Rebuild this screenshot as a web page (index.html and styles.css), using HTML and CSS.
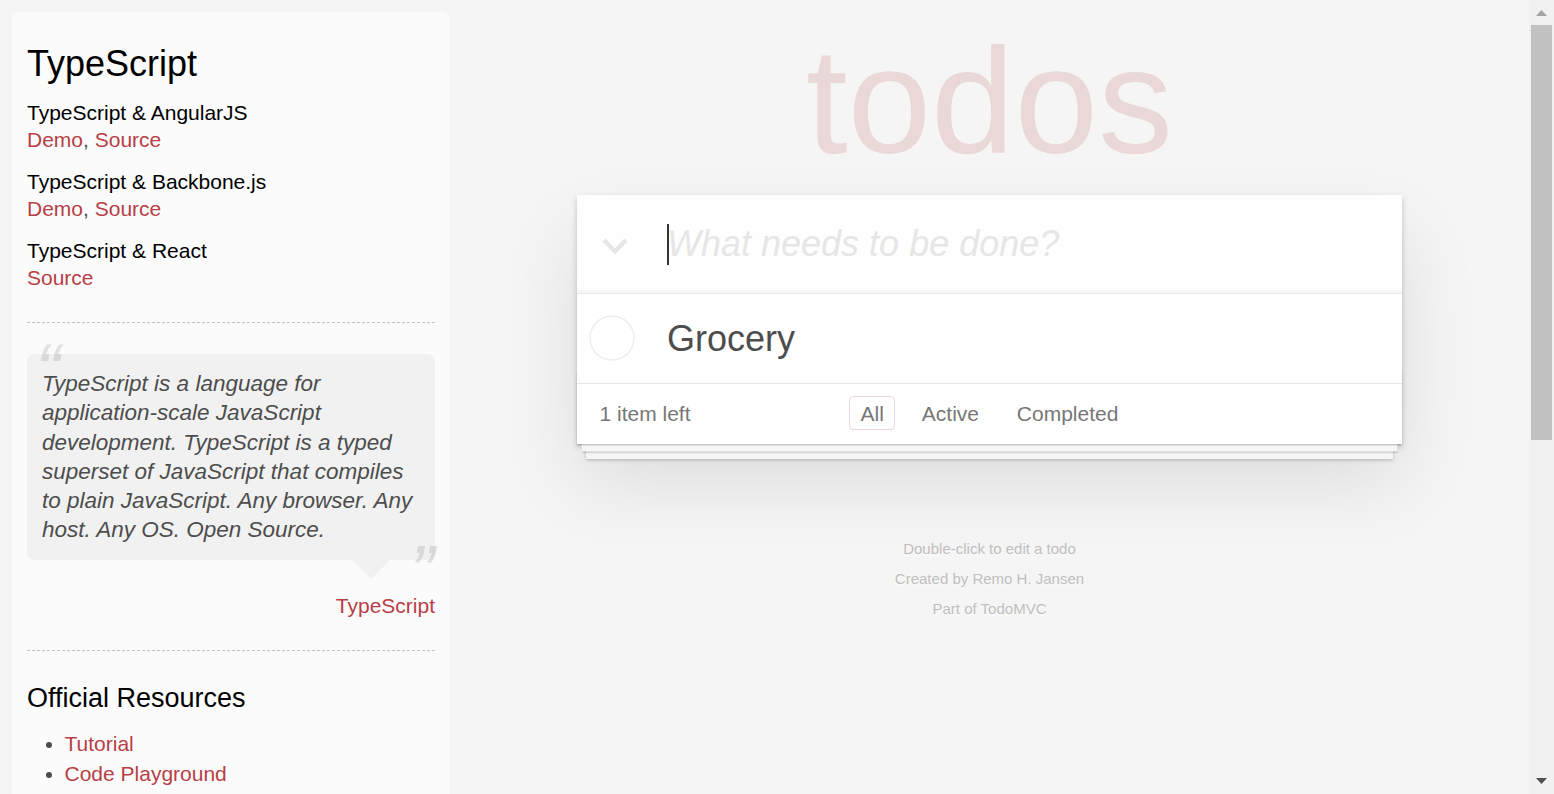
FILE: index.html
```html
<!DOCTYPE html>
<html lang="en">
<head>
<meta charset="utf-8">
<title>TypeScript • TodoMVC</title>
<link rel="stylesheet" href="styles.css">
</head>
<body>
<div class="page">
  <aside class="learn">
    <header>
      <h3>TypeScript</h3>
      <div class="source-links">
        <h5>TypeScript &amp; AngularJS</h5>
        <a href="#">Demo</a>, <a href="#">Source</a>
      </div>
      <div class="source-links">
        <h5>TypeScript &amp; Backbone.js</h5>
        <a href="#">Demo</a>, <a href="#">Source</a>
      </div>
      <div class="source-links">
        <h5>TypeScript &amp; React</h5>
        <a href="#">Source</a>
      </div>
    </header>
    <hr>
    <blockquote class="quote">
      <div class="speech-bubble">
        <p class="quote-text">TypeScript is a language for application-scale JavaScript development. TypeScript is a typed superset of JavaScript that compiles to plain JavaScript. Any browser. Any host. Any OS. Open Source.</p>
      </div>
      <footer><a href="#">TypeScript</a></footer>
    </blockquote>
    <hr>
    <h4>Official Resources</h4>
    <ul>
      <li><a href="#">Tutorial</a></li>
      <li><a href="#">Code Playground</a></li>
    </ul>
  </aside>

  <main class="main">
    <h1 class="title">todos</h1>
    <section class="todoapp">
      <header class="new-todo-row">
        <svg class="toggle-all" viewBox="0 0 28 19" width="28" height="19" aria-hidden="true">
          <polyline points="3,3 14,14.5 25,3" fill="none" stroke="#e6e6e6" stroke-width="4.2"/>
        </svg>
        <input class="new-todo" type="text" placeholder="What needs to be done?">
        <span class="caret"></span>
      </header>
      <section class="todo-main">
        <ul class="todo-list">
          <li class="todo-item">
            <svg class="toggle" viewBox="0 0 46 46" width="46" height="46" aria-hidden="true">
              <circle cx="23" cy="23" r="22" fill="none" stroke="#ededed" stroke-width="1.4"/>
            </svg>
            <label class="todo-label">Grocery</label>
          </li>
        </ul>
      </section>
      <footer class="footer">
        <span class="todo-count"><strong>1</strong> item left</span>
        <ul class="filters">
          <li><a href="#" class="selected">All</a></li>
          <li><a href="#">Active</a></li>
          <li><a href="#">Completed</a></li>
        </ul>
      </footer>
    </section>
    <footer class="info">
      <p>Double-click to edit a todo</p>
      <p>Created by <a href="#">Remo H. Jansen</a></p>
      <p>Part of <a href="#">TodoMVC</a></p>
    </footer>
  </main>
</div>

<div class="scrollbar" aria-hidden="true">
  <div class="sb-button">
    <svg width="11" height="6" viewBox="0 0 11 6"><polygon points="0,6 5.5,0 11,6" fill="#a3a3a3"/></svg>
  </div>
  <div class="sb-thumb"></div>
  <div class="sb-track"></div>
  <div class="sb-button sb-down">
    <svg width="11" height="6" viewBox="0 0 11 6"><polygon points="0,0 11,0 5.5,6" fill="#505050"/></svg>
  </div>
</div>
</body>
</html>
```

FILE: styles.css
```css
html, body {
  margin: 0;
  padding: 0;
}

body {
  font: 21px/29px "Liberation Sans", Arial, sans-serif;
  background: #f5f5f5;
  color: #4d4d4d;
}

.page {
  display: flex;
  align-items: flex-start;
}

/* ---------- learn sidebar ---------- */
.learn {
  flex: none;
  width: 408px;
  margin: 12px 0 0 12px;
  padding: 15px;
  border-radius: 7.5px;
  background: rgba(255, 255, 255, 0.6);
}

.learn a {
  color: #b83f45;
  text-decoration: none;
}

.learn h3,
.learn h4,
.learn h5 {
  margin: 15px 0;
  font-weight: 500;
  line-height: 1.2;
  color: #000;
}

.learn h3 { font-size: 36px; }
.learn h4 { font-size: 27px; }
.learn h5 { font-size: 21px; line-height: 25px; margin-bottom: 0; }

.learn hr {
  margin: 30px 0;
  border: 0;
  border-top: 1px dashed #c5c5c5;
  border-bottom: 1px dashed #f7f7f7;
}

.quote {
  position: relative;
  margin: 30px 0 90px;
  padding: 0;
}

.speech-bubble {
  position: relative;
  padding: 15px;
  background: rgba(0, 0, 0, 0.04);
  border-radius: 7.5px;
}

.speech-bubble::after {
  content: "";
  position: absolute;
  top: 100%;
  right: 45px;
  border: 19.5px solid transparent;
  border-top-color: rgba(0, 0, 0, 0.04);
}

.quote-text {
  margin: 0;
  font-size: 22.5px;
  line-height: 1.3;
  font-style: italic;
}

.quote-text::before {
  content: "\201C";
  position: absolute;
  top: -21px;
  left: 8.5px;
  font-size: 75px;
  line-height: 1;
  opacity: 0.15;
}

.quote-text::after {
  content: "\201D";
  position: absolute;
  bottom: -49px;
  right: 0.5px;
  font-size: 75px;
  line-height: 1;
  opacity: 0.15;
}

.quote footer {
  position: absolute;
  right: 0;
  bottom: -60px;
}

.learn ul {
  margin: 0 0 45px 37.5px;
  padding: 0;
}

.learn li {
  line-height: 30px;
}

/* ---------- todo app ---------- */
.main {
  flex: none;
  width: 825px;
  margin-left: 127px;
}

.title {
  margin: 26px 0 19px;
  height: 150px;
  font-size: 150px;
  line-height: 150px;
  font-weight: 100;
  text-align: center;
  color: rgba(175, 47, 47, 0.15);
}

.todoapp {
  position: relative;
  background: #fff;
  box-shadow: 0 3px 6px 0 rgba(0, 0, 0, 0.2), 0 37.5px 75px 0 rgba(0, 0, 0, 0.1);
}

.new-todo-row {
  position: relative;
}

.toggle-all {
  position: absolute;
  left: 24px;
  top: 42px;
}

.new-todo {
  display: block;
  box-sizing: border-box;
  width: 100%;
  height: 98.4px;
  margin: 0;
  padding: 24px 24px 24px 90px;
  border: none;
  outline: none;
  font-family: "Liberation Sans", Arial, sans-serif;
  font-size: 36px;
  line-height: 50.4px;
  color: #4d4d4d;
  background: rgba(0, 0, 0, 0.003);
  box-shadow: inset 0 -3px 1.5px rgba(0, 0, 0, 0.03);
  caret-color: transparent;
}

.new-todo::placeholder {
  font-style: italic;
  color: #e6e6e6;
}

.caret {
  position: absolute;
  left: 90px;
  top: 29px;
  width: 2px;
  height: 41px;
  background: #333;
}

.todo-main {
  border-top: 1.5px solid #e6e6e6;
}

.todo-list {
  margin: 0;
  padding: 0;
  list-style: none;
}

.todo-item {
  position: relative;
  font-size: 36px;
}

.toggle {
  position: absolute;
  left: 11.5px;
  top: 0;
  bottom: 0;
  margin: auto 0;
}

.todo-label {
  display: block;
  margin-left: 67.5px;
  padding: 22.5px 90px 22.5px 22.5px;
  line-height: 1.2;
  white-space: pre;
}

.footer {
  position: relative;
  height: 30px;
  padding: 15px 22.5px;
  line-height: 29.4px;
  color: #777;
  text-align: center;
  border-top: 1.5px solid #e6e6e6;
}

.footer::before {
  content: "";
  position: absolute;
  right: 0;
  bottom: 0;
  left: 0;
  height: 75px;
  overflow: hidden;
  box-shadow: 0 1.5px 1.5px rgba(0, 0, 0, 0.2),
    0 12px 0 -4.5px #f6f6f6,
    0 13.5px 1.5px -4.5px rgba(0, 0, 0, 0.2),
    0 24px 0 -9px #f6f6f6,
    0 25.5px 3px -9px rgba(0, 0, 0, 0.2);
}

.todo-count {
  float: left;
  text-align: left;
}

.todo-count strong {
  font-weight: 300;
}

.filters {
  position: absolute;
  right: 0;
  left: 0;
  margin: 0;
  padding: 0;
  list-style: none;
}

.filters li {
  display: inline;
}

.filters a {
  margin: 4.5px;
  padding: 4.5px 10.5px;
  color: inherit;
  text-decoration: none;
  border: 1.5px solid transparent;
  border-radius: 4.5px;
}

.filters a.selected {
  border-color: rgba(175, 47, 47, 0.2);
}

.info {
  margin: 97.5px auto 0;
  color: #bfbfbf;
  font-size: 15px;
  text-shadow: 0 1.5px 0 rgba(255, 255, 255, 0.5);
  text-align: center;
}

.info p {
  margin: 15px 0;
  line-height: 1;
}

.info a {
  color: inherit;
  text-decoration: none;
}

/* ---------- window scrollbar (drawn over the page edge) ---------- */
.scrollbar {
  position: fixed;
  top: 0;
  right: 0;
  bottom: 0;
  width: 25px;
  display: flex;
  flex-direction: column;
  background: #f1f1f1;
}

.sb-button {
  flex: none;
  height: 25px;
  display: flex;
  justify-content: center;
  padding-top: 10px;
  box-sizing: border-box;
}

.sb-down {
  padding-top: 9px;
}

.sb-thumb {
  flex: none;
  height: 415px;
  margin: 0 2px;
  background: #c1c1c1;
}

.sb-track {
  flex: 1;
}
```
